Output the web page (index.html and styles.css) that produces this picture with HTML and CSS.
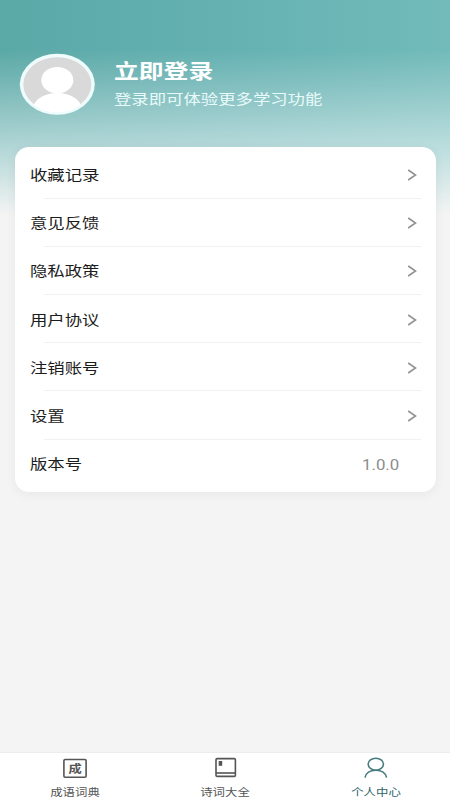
FILE: index.html
```html
<!DOCTYPE html>
<html lang="zh-CN">
<head>
<meta charset="utf-8">
<title>个人中心</title>
<link rel="stylesheet" href="styles.css">
</head>
<body>
<div class="app">
  <main class="page">
    <header class="profile">
      <svg class="avatar" viewBox="0 0 76 62">
        <defs><clipPath id="face"><ellipse cx="38.3" cy="31.3" rx="34.5" ry="28"/></clipPath></defs>
        <ellipse cx="38.3" cy="31.3" rx="37.5" ry="30.5" fill="#effcfc"/>
        <ellipse cx="38.3" cy="31.3" rx="34" ry="27" fill="#d9d9d9"/>
        <g clip-path="url(#face)" fill="#fff">
          <ellipse cx="38.3" cy="56" rx="24.5" ry="16"/>
          <ellipse cx="38.3" cy="27.2" rx="16" ry="13.2"/>
        </g>
      </svg>
      <div class="intro">
        <h1 class="wide">立即登录</h1>
        <p class="wide">登录即可体验更多学习功能</p>
      </div>
    </header>
    <section class="card">
      <div class="row"><span class="wide">收藏记录</span><svg class="arrow" viewBox="0 0 10 12"><path d="M1.2 1L8.5 6L1.2 11"/></svg></div>
      <div class="row"><span class="wide">意见反馈</span><svg class="arrow" viewBox="0 0 10 12"><path d="M1.2 1L8.5 6L1.2 11"/></svg></div>
      <div class="row"><span class="wide">隐私政策</span><svg class="arrow" viewBox="0 0 10 12"><path d="M1.2 1L8.5 6L1.2 11"/></svg></div>
      <div class="row"><span class="wide">用户协议</span><svg class="arrow" viewBox="0 0 10 12"><path d="M1.2 1L8.5 6L1.2 11"/></svg></div>
      <div class="row"><span class="wide">注销账号</span><svg class="arrow" viewBox="0 0 10 12"><path d="M1.2 1L8.5 6L1.2 11"/></svg></div>
      <div class="row"><span class="wide">设置</span><svg class="arrow" viewBox="0 0 10 12"><path d="M1.2 1L8.5 6L1.2 11"/></svg></div>
      <div class="row"><span class="wide">版本号</span><span class="version">1.0.0</span></div>
    </section>
  </main>
  <nav class="tabs">
    <div class="tab">
      <svg class="icon" viewBox="0 0 26 22"><rect x="1.9" y="2.5" width="22.2" height="17.8" rx="1.2"/><text class="seal" transform="translate(13 15.6) scale(1.2 1)" text-anchor="middle">成</text></svg>
      <span>成语词典</span>
    </div>
    <div class="tab">
      <svg class="icon" viewBox="0 0 26 22"><rect x="4" y="1.6" width="19.4" height="17.8" rx="1.2"/><path d="M4 16H23.4"/><rect class="mark" x="6.7" y="4" width="3.5" height="4.8"/></svg>
      <span>诗词大全</span>
    </div>
    <div class="tab active">
      <svg class="icon" viewBox="0 0 26 22"><ellipse cx="13.8" cy="7.2" rx="7.6" ry="6"/><path d="M3 20.6C3.8 16.2 8 13.2 13.8 13.2S23.8 16.2 24.6 20.6"/></svg>
      <span>个人中心</span>
    </div>
  </nav>
</div>
</body>
</html>
```
FILE: styles.css
```css
* { box-sizing: border-box; }

body {
  margin: 0;
  font-family: "Noto Sans CJK SC", sans-serif;
}

.app {
  display: flex;
  flex-direction: column;
  width: 450px;
  height: 800px;
  overflow: hidden;
  background: #f4f4f4;
}

.page {
  flex: 1;
  padding: 0 14px 0 15px;
  background:
    linear-gradient(to bottom, rgba(244,244,244,0) 50px, rgba(244,244,244,.17) 80px, rgba(240,246,247,.48) 130px, rgba(240,246,247,.6) 150px, #f4f4f4 215px),
    linear-gradient(to right, #5aa9a7, #65b1b2 50%, #72bbba);
}

.profile {
  display: flex;
  height: 147px;
  padding: 53px 0 0 4px;
}

.avatar {
  width: 76px;
  height: 62px;
}

.intro {
  margin-left: 19px;
  color: #fff;
}

/* Lettering is wider than it is tall throughout the screen */
.wide {
  display: block;
  width: max-content;
  transform: scaleX(1.24);
  transform-origin: left center;
}

.intro h1 {
  margin: 4px 0 0;
  font-size: 20px;
  line-height: 28px;
  font-weight: 700;
}

.intro p {
  margin: 3px 0 0;
  font-size: 14px;
  line-height: 20px;
  color: #e9fafa;
}

.card {
  height: 344.5px;
  padding: 3.5px 15px 0;
  border-radius: 14px;
  background: #fff;
  box-shadow: 0 2px 12px rgba(0,0,0,.055);
}

.row {
  display: flex;
  align-items: center;
  justify-content: space-between;
  height: 48.2px;
  padding-right: 4px;
  font-size: 14px;
  color: #1c1c1c;
  background: linear-gradient(#f1f1f1, #f1f1f1) 14px 100% / 378px 1px no-repeat;
}

.row .wide { margin-top: -1.2px; }

.row:last-child {
  padding-right: 22px;
  background: none;
}

.arrow {
  width: 10px;
  height: 12px;
  margin-top: 1px;
  fill: none;
  stroke: #929292;
  stroke-width: 1.6;
}

.version {
  margin-top: 2px;
  font-family: Roboto, sans-serif;
  font-size: 15px;
  color: #8c8c8c;
  transform: scaleX(1.12);
  transform-origin: right center;
}

.tabs {
  display: flex;
  height: 48px;
  background: #fff;
  border-top: 1px solid #ececec;
}

.tab {
  flex: 1;
  display: flex;
  flex-direction: column;
  align-items: center;
  padding-top: 4px;
  font-size: 10px;
  line-height: 14px;
  color: #555;
}

.tab span {
  margin-top: 6px;
  transform: scaleX(1.24);
}

.icon {
  width: 26px;
  height: 22px;
  fill: none;
  stroke: #555;
  stroke-width: 1.6;
}

.mark, .seal {
  fill: #555;
  stroke: none;
}

.seal {
  font: 700 11px "Noto Sans CJK SC", serif;
}

.active { color: #2e6669; }
.active .icon { stroke: #497c7e; }
.active span { margin-left: 2px; }
```
